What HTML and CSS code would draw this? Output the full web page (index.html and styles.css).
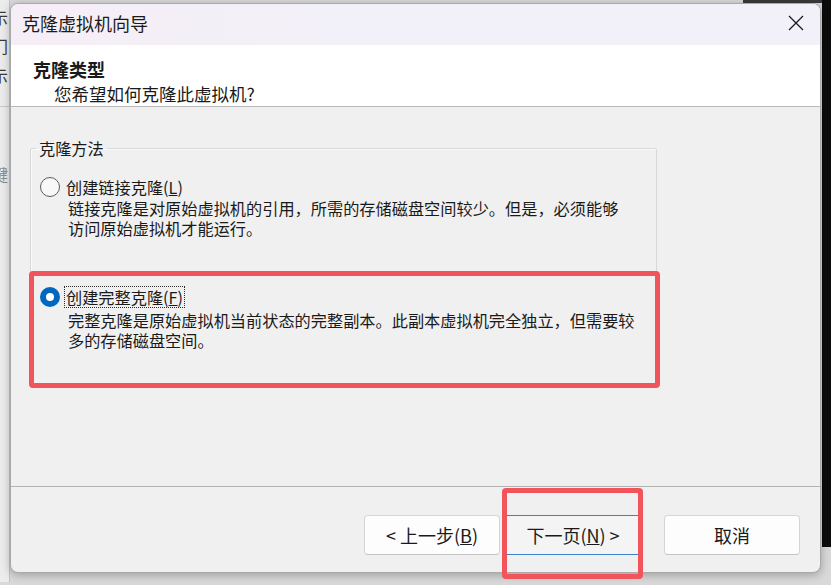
FILE: index.html
```html
<!DOCTYPE html>
<html lang="zh-CN">
<head>
<meta charset="utf-8">
<title>克隆虚拟机向导</title>
<link rel="stylesheet" href="styles.css">
</head>
<body>
<div class="desk">
  <div class="bgstrip">
    <div class="bgchar c1">示</div>
    <div class="bgchar c2">门</div>
    <div class="bgchar c3">示</div>
    <div class="bgrule"></div>
    <div class="bgchar c4">键</div>
  </div>
  <div class="window">
    <div class="titlebar">
      <span class="title">克隆虚拟机向导</span>
      <svg class="close" width="16" height="16" viewBox="0 0 16 16" aria-label="关闭">
        <path d="M1 1 L15 15 M15 1 L1 15" stroke="#1b1b1b" stroke-width="1.3" fill="none"/>
      </svg>
    </div>
    <div class="header">
      <div class="h-title">克隆类型</div>
      <div class="h-sub">您希望如何克隆此虚拟机?</div>
    </div>
    <div class="content">
      <fieldset class="group">
        <legend class="group-legend">克隆方法</legend>
        <div class="option">
          <div class="opt-row">
            <span class="radio"></span>
            <span class="opt-label">创建链接克隆(<u>L</u>)</span>
          </div>
          <div class="opt-desc">
            <div class="desc-line">链接克隆是对原始虚拟机的引用，所需的存储磁盘空间较少。但是，必须能够</div>
            <div class="desc-line">访问原始虚拟机才能运行。</div>
          </div>
        </div>
        <div class="option option-full mark-option">
          <div class="opt-row">
            <span class="radio radio-on"></span>
            <span class="opt-label focus">创建完整克隆(<u>F</u>)</span>
          </div>
          <div class="opt-desc">
            <div class="desc-line">完整克隆是原始虚拟机当前状态的完整副本。此副本虚拟机完全独立，但需要较</div>
            <div class="desc-line">多的存储磁盘空间。</div>
          </div>
        </div>
      </fieldset>
    </div>
    <div class="footer">
      <button class="btn">&lt; 上一步(<u>B</u>)</button>
      <button class="btn btn-next mark-btn">下一页(<u>N</u>) &gt;</button>
      <button class="btn btn-cancel">取消</button>
    </div>
  </div>
</div>
</body>
</html>
```

FILE: styles.css
```css
* { box-sizing: border-box; }

html, body {
  margin: 0;
  padding: 0;
}

body {
  width: 831px;
  height: 585px;
  overflow: hidden;
  font-family: "Noto Sans CJK SC", "Noto Sans", sans-serif;
  color: #1a1a1a;
  background:
    linear-gradient(#0c0c0c, #0c0c0c) right 0 top 0 / 9px 547px no-repeat,
    linear-gradient(#3a3a3a, #3a3a3a) 743px 0 / 88px 3px no-repeat,
    #d9d9d9;
}

.desk {
  display: flex;
  padding-top: 3px;
}

/* background application peeking out on the left */
.bgstrip {
  flex: none;
  width: 10px;
  height: 582px;
  margin-top: -3px;
  background: #ececec;
  border-right: 1px solid #c4c4c4;
  overflow: hidden;
  display: flex;
  flex-direction: column;
}

.bgchar {
  font-size: 16px;
  line-height: 20px;
  margin-left: -8px;
  color: #3a3a3a;
}
.bgchar.c1 { margin-top: 7px; }
.bgchar.c2 { margin-top: 9px; }
.bgchar.c3 { margin-top: 9px; }
.bgrule {
  margin-top: 21px;
  height: 1px;
  background: #c8c8c8;
}
.bgchar.c4 { margin-top: 57px; color: #8a8a8a; }

/* dialog window */
.window {
  flex: none;
  width: 811px;
  height: 570px;
  border: 1px solid #a9a9a9;
  border-radius: 8px;
  background: #f0f0f0;
  box-shadow: 0 2px 10px rgba(0, 0, 0, 0.28);
  display: flex;
  flex-direction: column;
}

.titlebar {
  flex: none;
  height: 41px;
  background: linear-gradient(90deg, #f6eef6 0%, #f2f0f8 40%, #f2f0f8 100%);
  border-radius: 7px 7px 0 0;
  display: flex;
  align-items: center;
  justify-content: space-between;
  padding: 0 16px 4px 11px;
}

.title {
  font-size: 18px;
  line-height: 26px;
  color: #1b1b1b;
}

.close {
  display: block;
  margin-top: 1px;
}

.header {
  flex: none;
  height: 62px;
  background: #ffffff;
  border-bottom: 1px solid #b9b9b9;
  padding: 12px 0 0 22px;
}

.h-title {
  font-size: 18px;
  font-weight: 700;
  line-height: 24px;
}

.h-sub {
  font-size: 17.5px;
  line-height: 24px;
  padding-left: 21px;
  margin-top: 1px;
}

.content {
  flex: none;
  height: 380px;
  border-bottom: 1px solid #b4b4b4;
  padding: 31px 0 0 19px;
}

.group {
  width: 627px;
  margin: 0;
  padding: 0 0 37px 0;
  border: 1px solid #d8d8d8;
  border-radius: 2px;
  box-shadow: inset 1px 1px 0 #fafafa;
  min-width: 0;
}

.group-legend {
  margin-left: 5px;
  padding: 0 3px;
  font-size: 16.2px;
  line-height: 20px;
}

.option {
  position: relative;
  padding-left: 9px;
  font-size: 16.2px;
}

.option:first-of-type { margin-top: 18px; }
.option-full { margin-top: 48px; }

.opt-row {
  display: flex;
  align-items: center;
  height: 22px;
}

.radio {
  flex: none;
  width: 20px;
  height: 20px;
  border-radius: 50%;
  border: 1px solid #5c5c5c;
  background: #f8f8f8;
}

.radio-on {
  border: 6px solid #0067c0;
  background: #ffffff;
}

.opt-label {
  margin-left: 4px;
  padding: 0 1px;
  line-height: 20px;
  border: 1px dotted transparent;
  white-space: nowrap;
}

.opt-label.focus {
  border-color: #2a2a2a;
}

.opt-desc {
  margin-top: 0;
  padding-left: 28px;
}

.option-full .opt-desc {
  margin-top: 2px;
}

.desc-line {
  height: 20px;
  line-height: 20px;
  white-space: nowrap;
}

/* red annotation boxes */
.mark-option::after {
  content: "";
  position: absolute;
  top: -15px;
  left: -2px;
  right: -4px;
  height: 107px;
  border: 5px solid #f1545a;
  border-radius: 4px;
  pointer-events: none;
}

.footer {
  flex: 1;
  border-radius: 0 0 7px 7px;
  display: flex;
  justify-content: flex-end;
  align-items: flex-start;
  padding: 28px 20px 0 0;
}

.btn {
  position: relative;
  width: 136px;
  height: 40px;
  margin: 0;
  padding: 0;
  font-family: "Noto Sans CJK SC", "Noto Sans", sans-serif;
  font-size: 18px;
  line-height: 24px;
  color: #1a1a1a;
  background: #fdfdfd;
  border: 1px solid #d6d6d6;
  border-bottom-color: #c4c4c4;
  border-radius: 4px;
}

.btn-next {
  margin-left: 5px;
  background: #f4f4f4;
  border: 1px solid #3a82cf;
  border-radius: 0;
}

.btn-cancel {
  margin-left: 23px;
}

.mark-btn::after {
  content: "";
  position: absolute;
  top: -28px;
  left: -4px;
  right: -3px;
  bottom: -25px;
  border: 5px solid #f1545a;
  border-radius: 4px;
  pointer-events: none;
}
```
